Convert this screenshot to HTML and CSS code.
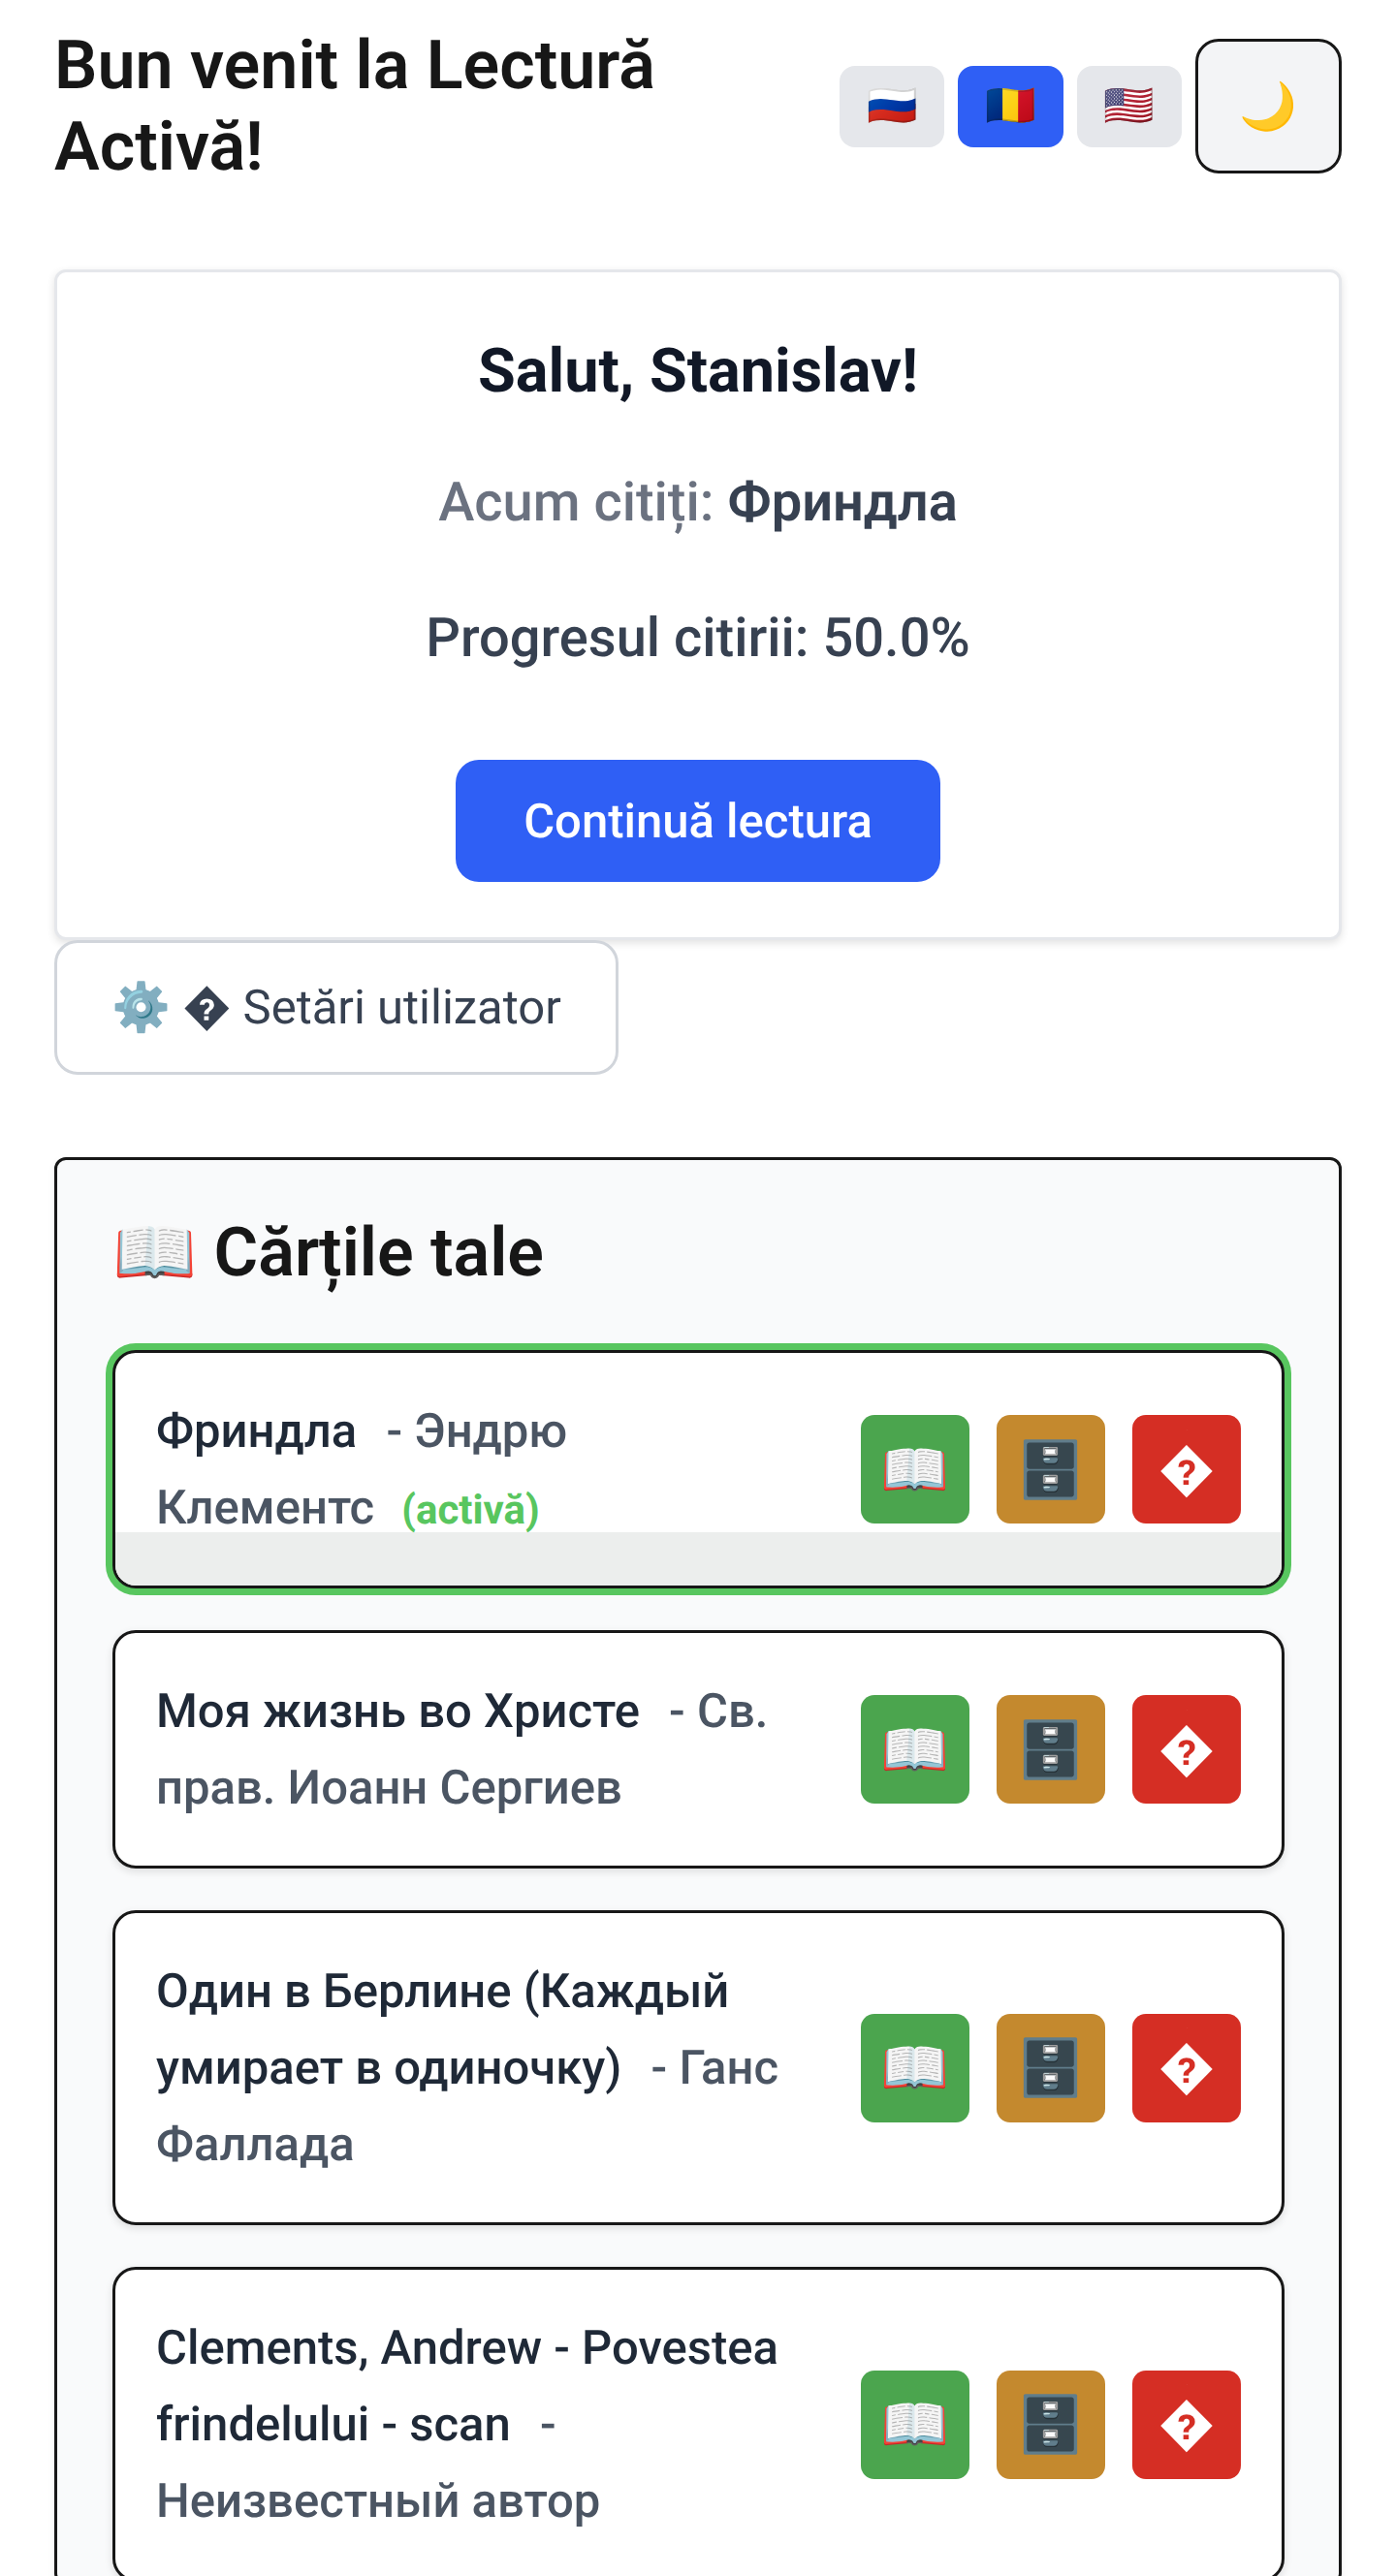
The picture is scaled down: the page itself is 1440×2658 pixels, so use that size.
FILE: index.html
```html
<!DOCTYPE html>
<html lang="ro">
<head>
  <meta charset="UTF-8" />
  <title>Lectură Activă</title>
  <link rel="stylesheet" href="styles.css">
</head>
<body>
  <header class="top-bar">
    <h1>Bun venit la Lectură Activă!</h1>
    <div class="top-actions">
      <button class="lang-btn">🇷🇺</button>
      <button class="lang-btn current">🇷🇴</button>
      <button class="lang-btn">🇺🇸</button>
      <button class="theme-btn">🌙</button>
    </div>
  </header>

  <section class="welcome-card">
    <h2>Salut, Stanislav!</h2>
    <p class="now-reading">Acum citiți: <strong>Фриндла</strong></p>
    <p class="progress-text">Progresul citirii: 50.0%</p>
    <button class="continue-btn">Continuă lectura</button>
  </section>

  <button class="settings-btn">⚙️ � Setări utilizator</button>

  <section class="books-panel">
    <h2>📖 Cărțile tale</h2>
    <div class="book-list">
      <div class="book active">
        <div class="book-strip"></div>
        <div class="book-info"><span class="book-title">Фриндла</span> <span class="book-author">- Эндрю Клементс</span> <span class="book-badge">(activă)</span></div>
        <div class="book-actions">
          <button class="read-btn">📖</button>
          <button class="archive-btn">🗄️</button>
          <button class="delete-btn">�</button>
        </div>
      </div>
      <div class="book">
        <div class="book-info"><span class="book-title">Моя жизнь во Христе</span> <span class="book-author">- Св. прав. Иоанн Сергиев</span></div>
        <div class="book-actions">
          <button class="read-btn">📖</button>
          <button class="archive-btn">🗄️</button>
          <button class="delete-btn">�</button>
        </div>
      </div>
      <div class="book">
        <div class="book-info"><span class="book-title">Один в Берлине (Каждый умирает в одиночку)</span> <span class="book-author">- Ганс Фаллада</span></div>
        <div class="book-actions">
          <button class="read-btn">📖</button>
          <button class="archive-btn">🗄️</button>
          <button class="delete-btn">�</button>
        </div>
      </div>
      <div class="book">
        <div class="book-info"><span class="book-title">Clements, Andrew - Povestea frindelului - scan</span> <span class="book-author">- Неизвестный автор</span></div>
        <div class="book-actions">
          <button class="read-btn">📖</button>
          <button class="archive-btn">🗄️</button>
          <button class="delete-btn">�</button>
        </div>
      </div>
    </div>
  </section>
</body>
</html>
```

FILE: styles.css
```css
html, body {
  margin: 0;
  padding: 0;
  height: 2658px;
  overflow: hidden;
  background: #fff;
  font-family: Roboto, "Noto Sans", sans-serif;
  color: #171717;
  text-rendering: geometricPrecision;
}

body {
  padding: 40px 56px 0;
  box-sizing: border-box;
}

button {
  font-family: inherit;
  text-rendering: inherit;
  cursor: pointer;
}

.top-bar {
  display: flex;
  justify-content: space-between;
  align-items: center;
  height: 139px;
  margin-bottom: 99px;
}

h1 {
  margin: 0;
  width: 680px;
  font-size: 70px;
  line-height: 84px;
  font-weight: 600;
}

.top-actions {
  display: flex;
  align-items: center;
  gap: 14px;
}

.lang-btn {
  width: 108.33px;
  height: 84px;
  border: none;
  border-radius: 16px;
  background: #e5e7eb;
  font-size: 42px;
  padding: 0;
}

.lang-btn.current {
  background: #2f5ff5;
}

.theme-btn {
  width: 151px;
  height: 139px;
  border: 3px solid #171717;
  border-radius: 24px;
  background: #f3f4f6;
  font-size: 48px;
  padding: 0;
}

.welcome-card {
  box-sizing: border-box;
  border: 3px solid #e5e7eb;
  border-radius: 12px;
  box-shadow: 0 3px 9px rgba(0, 0, 0, 0.12);
  padding: 61px 0 57px;
  text-align: center;
  background: #fff;
}

.welcome-card h2 {
  margin: 0 0 52px;
  font-size: 63px;
  line-height: 84px;
  font-weight: 700;
  color: #111827;
}

.now-reading, .progress-text {
  font-size: 56px;
  line-height: 80px;
  font-weight: 500;
  color: #374151;
}

.now-reading {
  margin: 0 0 60px;
  color: #6b7280;
}

.now-reading strong {
  color: #374151;
  font-weight: 600;
}

.progress-text {
  margin: 0 0 86px;
}

.continue-btn {
  width: 500px;
  height: 126px;
  border: none;
  border-radius: 24px;
  background: #2f5ff5;
  color: #fff;
  font-size: 49px;
  font-weight: 500;
}

.settings-btn {
  display: block;
  height: 139px;
  padding: 0 56px;
  border: 3px solid #d1d5db;
  border-radius: 24px;
  background: #fff;
  color: #374151;
  font-size: 49px;
}

.books-panel {
  margin-top: 85px;
  border: 3px solid #171717;
  border-radius: 12px;
  background: #f9fafb;
  box-shadow: 0 3px 9px rgba(0, 0, 0, 0.05);
  padding: 53px 56px 0 57px;
}

.books-panel h2 {
  margin: 0 0 57px;
  font-size: 70px;
  line-height: 86px;
  font-weight: 600;
}

.book-list {
  display: flex;
  flex-direction: column;
  gap: 43px;
}

.book {
  position: relative;
  display: flex;
  align-items: center;
  gap: 76px;
  border: 3px solid #171717;
  border-radius: 24px;
  background: #fff;
  box-shadow: 0 3px 9px rgba(0, 0, 0, 0.12);
  padding: 41px 42px;
}

.book.active {
  box-shadow: 0 0 0 7px #58c65f;
}

.book-strip {
  position: absolute;
  left: 0;
  right: 0;
  bottom: 0;
  height: 55px;
  background: #eceeed;
  border-radius: 0 0 21px 21px;
}

.book-info {
  position: relative;
  flex: 1;
  font-size: 49px;
  line-height: 79px;
  color: #4b5563;
  font-weight: 500;
}

.book-title {
  color: #1f2937;
  margin-right: 18px;
}

.book-badge {
  margin-left: 16px;
  font-size: 42px;
  line-height: 1;
  font-weight: 700;
  color: #58c65f;
}

.book-actions {
  position: relative;
  display: flex;
  gap: 28px;
}

.book-actions button {
  width: 112px;
  height: 112px;
  border: none;
  border-radius: 14px;
  color: #fff;
  font-size: 57px;
  padding: 0;
}

.read-btn { background: #4ba54e; }
.archive-btn { background: #c4892e; }
.delete-btn { background: #d52e24; }
```
